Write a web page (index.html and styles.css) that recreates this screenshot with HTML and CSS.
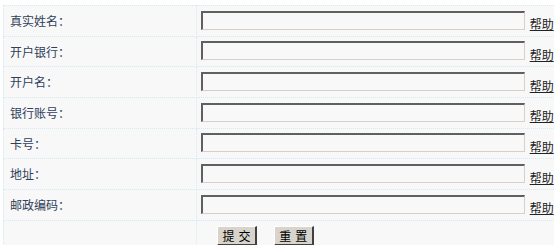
FILE: index.html
```html
<!DOCTYPE html>
<html lang="zh-CN">
<head>
<meta charset="utf-8">
<title>银行信息</title>
<link rel="stylesheet" href="styles.css">
</head>
<body>

<form class="bank-form" action="#">
  <table class="form-table">
    <tr>
      <td class="label">真实姓名：</td>
      <td class="field"><input type="text" class="txt"> <a href="#" class="help">帮助</a></td>
    </tr>
    <tr>
      <td class="label">开户银行：</td>
      <td class="field"><input type="text" class="txt"> <a href="#" class="help">帮助</a></td>
    </tr>
    <tr>
      <td class="label">开户名：</td>
      <td class="field"><input type="text" class="txt"> <a href="#" class="help">帮助</a></td>
    </tr>
    <tr>
      <td class="label">银行账号：</td>
      <td class="field"><input type="text" class="txt"> <a href="#" class="help">帮助</a></td>
    </tr>
    <tr>
      <td class="label">卡号：</td>
      <td class="field"><input type="text" class="txt"> <a href="#" class="help">帮助</a></td>
    </tr>
    <tr>
      <td class="label">地址：</td>
      <td class="field"><input type="text" class="txt"> <a href="#" class="help">帮助</a></td>
    </tr>
    <tr>
      <td class="label">邮政编码：</td>
      <td class="field"><input type="text" class="txt"> <a href="#" class="help">帮助</a></td>
    </tr>
    <tr>
      <td class="label"></td>
      <td class="buttons">
        <button type="submit" class="btn">提交</button>
        <button type="reset" class="btn">重置</button>
      </td>
    </tr>
  </table>
</form>

</body>
</html>
```

FILE: styles.css
```css
* {
  box-sizing: border-box;
}

body {
  margin: 0;
  background-color: #ffffff;
  font-family: "Noto Sans CJK SC", "Noto Sans", sans-serif;
  font-size: 12px;
  color: #2e405a;
  overflow: hidden;
}

/* outer table */
.form-table {
  margin: 5px 0 0 3px;
  width: 551px;
  border-collapse: collapse;
  background-color: #f8f8f8;
  border: 1px dotted #b9dcee;
  border-right: none;
}

.form-table td {
  border: 1px dotted #d3e9f4;
  height: 30.7px;
  padding: 0;
  vertical-align: middle;
}

.label {
  width: 193px;
  padding-left: 6px !important;
  line-height: 14px;
}

.field {
  padding-left: 4px !important;
  white-space: nowrap;
  border-right: none !important;
}

.txt {
  width: 324px;
  height: 19px;
  margin: 0;
  padding: 0 2px;
  vertical-align: middle;
  background-color: #f8f8f8;
  border-style: solid;
  border-width: 2px 1px 1px 2px;
  border-color: #606060 #d8d0c8 #d8d0c8 #606060;
}

.help {
  display: inline-block;
  margin-left: 2px;
  vertical-align: -6px;
  color: #222;
  text-decoration: underline;
}

.buttons {
  padding-left: 20px !important;
  border-right: none !important;
  white-space: nowrap;
}

.btn {
  width: 40px;
  height: 20px;
  padding: 0 0 0 4px;
  margin: 0 14px 0 0;
  font-family: "Noto Sans CJK SC", sans-serif;
  font-size: 12px;
  line-height: 16px;
  letter-spacing: 4px;
  white-space: nowrap;
  color: #000;
  background-color: #d8d4cc;
  border-style: solid;
  border-width: 1px 2px 2px 1px;
  border-color: #ffffff #404040 #404040 #ffffff;
  vertical-align: middle;
}
```
